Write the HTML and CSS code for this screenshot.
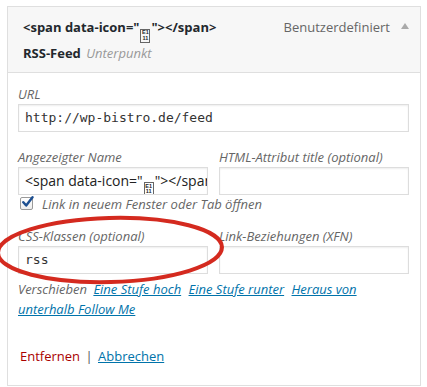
FILE: index.html
```html
<!DOCTYPE html>
<html lang="de">
<head>
<meta charset="utf-8">
<link rel="stylesheet" href="styles.css">
</head>
<body>
<div class="item">
  <div class="item-bar">
    <div class="item-title">
      <div class="title-main">&lt;span data-icon="<span class="tofu"><span>E1</span><span>11</span></span>"&gt;&lt;/span&gt;</div>
      <div class="title-sub"><b>RSS-Feed</b> <i class="sub">Unterpunkt</i></div>
    </div>
    <div class="item-controls">
      <span class="item-type">Benutzerdefiniert</span>
      <span class="arrow"></span>
    </div>
  </div>
  <div class="item-settings">
    <div class="field-wide">
      <label class="lbl">URL</label>
      <div class="input mono">http://wp-bistro.de/feed</div>
    </div>
    <div class="row">
      <div class="field-half">
        <label class="lbl">Angezeigter Name</label>
        <div class="input clip">&lt;span data-icon="<span class="tofu"><span>E1</span><span>11</span></span>"&gt;&lt;/span&gt;</div>
      </div>
      <div class="field-half">
        <label class="lbl">HTML-Attribut title (optional)</label>
        <div class="input"></div>
      </div>
    </div>
    <div class="check-row">
      <span class="checkbox"><svg width="14" height="14" viewBox="0 0 14 14"><path d="M2.5 7.2 L5.6 10.8 L12.4 1.8" fill="none" stroke="#1d4f91" stroke-width="2.6" stroke-linecap="round" stroke-linejoin="round"/></svg></span>
      <span class="lbl">Link in neuem Fenster oder Tab öffnen</span>
    </div>
    <div class="row row-css">
      <div class="field-half">
        <label class="lbl">CSS-Klassen (optional)</label>
        <div class="input mono">rss</div>
      </div>
      <div class="field-half">
        <label class="lbl">Link-Beziehungen (XFN)</label>
        <div class="input"></div>
      </div>
    </div>
    <div class="move">
      <span class="lbl">Verschieben</span>
      <a href="#">Eine Stufe hoch</a>
      <a href="#">Eine Stufe runter</a>
      <a href="#">Heraus von</a>
      <a href="#">unterhalb Follow Me</a>
    </div>
    <div class="actions">
      <a class="delete" href="#">Entfernen</a> <span class="sep">|</span> <a class="cancel" href="#">Abbrechen</a>
    </div>
  </div>
</div>
<svg class="mark" width="240" height="90" viewBox="0 0 240 90">
  <ellipse cx="113" cy="44" rx="112" ry="32" transform="rotate(-1.5 113 44)" fill="none" stroke="#d42a1f" stroke-width="4"/>
</svg>
</body>
</html>
```
FILE: styles.css
```css
* { box-sizing: border-box; }
body {
  margin: 0;
  background: #fff;
  font-family: "Open Sans", "Liberation Sans", sans-serif;
  font-size: 13px;
  color: #333;
  position: relative;
  width: 427px;
  height: 387px;
  overflow: hidden;
}
.item {
  margin: 6px 0 0 7px;
  width: 414px;
  border: 1px solid #dfdfdf;
}
.item-bar {
  display: flex;
  justify-content: space-between;
  align-items: flex-start;
  background: #f7f7f7;
  border-bottom: 1px solid #dfdfdf;
  padding: 10px 11px 9px 15px;
  line-height: 20px;
  color: #23282d;
}
.title-main { font-weight: 700; }
.title-sub b { font-weight: 700; }
.sub { color: #999; font-style: italic; margin-left: 2px; }
.item-controls {
  display: flex;
  align-items: center;
  gap: 11px;
  color: #666;
}
.arrow {
  width: 0;
  height: 0;
  border-left: 4px solid transparent;
  border-right: 4px solid transparent;
  border-bottom: 6px solid #aaa;
  margin-top: -2px;
}
.tofu {
  display: inline-flex;
  flex-direction: column;
  justify-content: center;
  align-items: center;
  width: 10px;
  height: 14px;
  border: 1px solid #666;
  vertical-align: -2px;
  font-size: 5.5px;
  line-height: 5.5px;
  font-weight: 700;
  letter-spacing: 0;
  margin: 0 1px;
  font-family: "Liberation Sans Narrow", "Liberation Sans", sans-serif;
  font-style: normal;
  overflow: hidden;
}
.item-settings {
  padding: 12px 11px 19px 10px;
}
.lbl {
  display: block;
  font-style: italic;
  color: #666;
  line-height: 18px;
}
.input {
  height: 28px;
  margin-top: 1px;
  border: 1px solid #ddd;
  box-shadow: inset 0 1px 2px rgba(0,0,0,.07);
  background: #fff;
  padding: 0 6px;
  line-height: 26px;
  color: #333;
  white-space: nowrap;
  overflow: hidden;
}
.mono {
  font-family: "DejaVu Sans Mono", "Liberation Mono", monospace;
  font-size: 13px;
}
.clip { color: #222; font-size: 14px; }
.row {
  display: flex;
  gap: 11px;
  margin-top: 16px;
}
.field-half { width: 190px; }
.check-row {
  display: flex;
  align-items: center;
  height: 20px;
  margin-top: -1px;
  padding-left: 2px;
}
.check-row .lbl { display: inline; line-height: 20px; }
.checkbox {
  display: inline-flex;
  align-items: center;
  justify-content: center;
  width: 13px;
  height: 13px;
  border: 1px solid #999;
  border-radius: 2px;
  background: linear-gradient(#fff, #eee);
  margin-right: 9px;
  overflow: visible;
}
.checkbox svg { margin: -3px -2px 0 0; }
.row-css { margin-top: 13px; }
.move {
  margin-top: 5px;
  line-height: 20px;
  font-style: italic;
}
.move .lbl { display: inline; line-height: 20px; margin-right: 3px; }
.move a { color: #0073aa; text-decoration: underline; margin-right: 4px; }
.actions {
  margin-top: 27px;
  line-height: 20px;
  color: #555;
  padding-left: 2px;
}
.delete { color: #a00; text-decoration: none; }
.cancel { color: #0073aa; text-decoration: underline; }
.sep { margin: 0 2px; }
.mark {
  position: absolute;
  left: -3px;
  top: 206px;
}
```
